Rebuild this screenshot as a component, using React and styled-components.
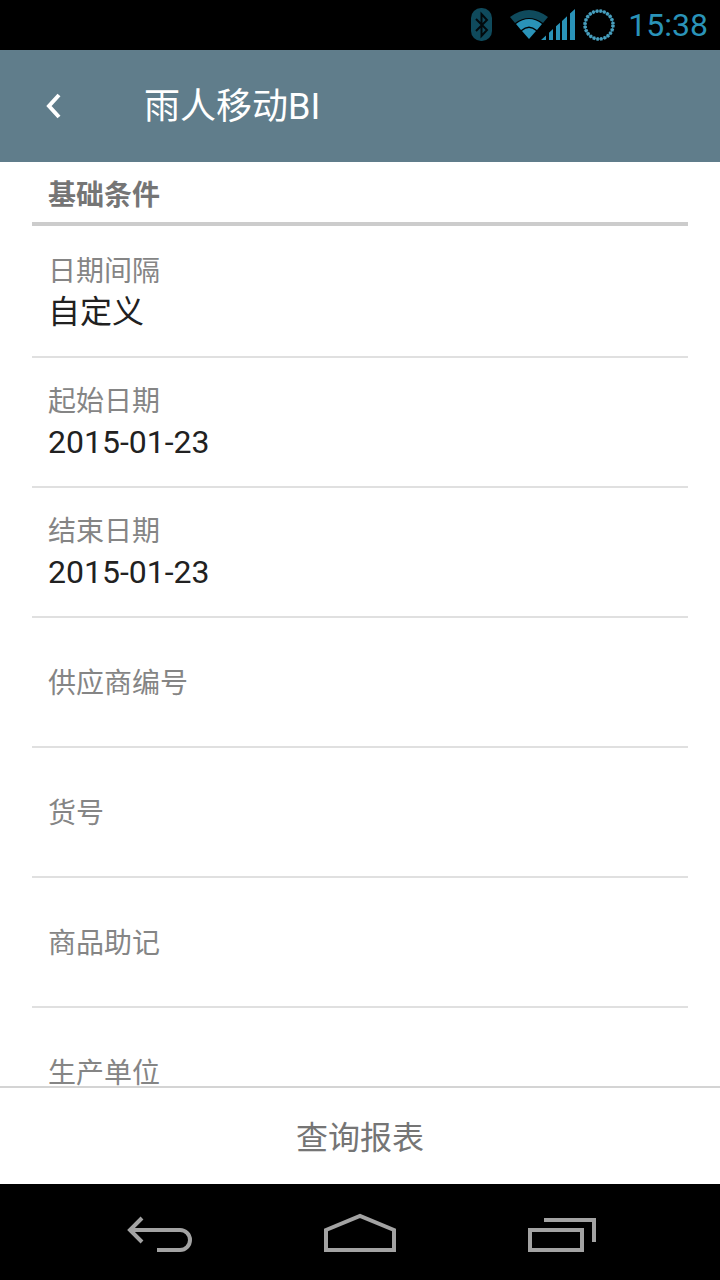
import React from 'react';
import styled, { createGlobalStyle } from 'styled-components';

const GlobalStyle = createGlobalStyle`
    html, body {
        margin: 0;
        padding: 0;
        background: #fff;
    }
    body {
        font-family: Roboto, "Noto Sans CJK SC", sans-serif;
    }
`;

const fields = [
    { label: '日期间隔', value: '自定义' },
    { label: '起始日期', value: '2015-01-23' },
    { label: '结束日期', value: '2015-01-23' },
    { label: '供应商编号' },
    { label: '货号' },
    { label: '商品助记' },
    { label: '生产单位' },
];

function App() {
    return (
        <Screen>
            <GlobalStyle />
            <StatusBar>
                <svg width="24" height="34" viewBox="0 0 24 34">
                    <rect x="1" y="0" width="21" height="33" rx="10" fill="#0f4a5c" />
                    <path d="M6 11 L17 22 L11.5 28 V6 L17 12 L6 23" fill="none" stroke="#020a0d" strokeWidth="2" />
                </svg>
                <SignalIcons width="66" height="34" viewBox="0 0 66 34">
                    <path d="M0 9 Q19 -5 38 9 L33 15 Q19 5 5 15 Z" fill="#0f4a5c" />
                    <path d="M6 16 Q19 6 32 16 L27 22 Q19 15 11 22 Z" fill="#2a93b8" />
                    <path d="M12 23 Q19 17 26 23 L19 31 Z" fill="#2a93b8" />
                    <path d="M31 32 L36 27.4 V32 Z M39 32 V24.7 L43 21 V32 Z M46 32 V18.3 L50 14.7 V32 Z M52 32 V12.9 L57 8.3 V32 Z M60 32 V5.6 L65 1 V32 Z" fill="#2a93b8" />
                </SignalIcons>
                <svg width="34" height="34" viewBox="0 0 34 34">
                    <circle cx="17" cy="17" r="14" fill="none" stroke="#2a7f9e" strokeWidth="1.5" />
                    <circle cx="17" cy="17" r="14" fill="none" stroke="#4a9fbd" strokeWidth="3.5" strokeDasharray="2.4 1.27" />
                </svg>
                <Clock>15:38</Clock>
            </StatusBar>
            <Header>
                <BackButton width="20" height="28" viewBox="0 0 20 28">
                    <path d="M15 3 L5 14 L15 25" fill="none" stroke="#fff" strokeWidth="4" />
                </BackButton>
                <Title>雨人移动BI</Title>
            </Header>
            <Content>
                <SectionTitle>基础条件</SectionTitle>
                {fields.map(field => (
                    <Row key={field.label}>
                        <Label>{field.label}</Label>
                        {field.value && <Value>{field.value}</Value>}
                    </Row>
                ))}
            </Content>
            <QueryBar>查询报表</QueryBar>
            <NavBar>
                <svg width="68" height="44" viewBox="0 0 68 44">
                    <path d="M16 8 L4 20 L16 32 M4 20 H54 A10 10 0 0 1 54 40 H31" fill="none" stroke="#a3a3a3" strokeWidth="4" />
                </svg>
                <svg width="74" height="44" viewBox="0 0 74 44">
                    <path d="M3 40 V20 L37 6 L71 20 V40 Z" fill="none" stroke="#a3a3a3" strokeWidth="4" />
                </svg>
                <svg width="70" height="44" viewBox="0 0 70 44">
                    <path d="M18 10 H68 V32" fill="none" stroke="#a3a3a3" strokeWidth="4" />
                    <rect x="4" y="20" width="52" height="20" fill="none" stroke="#a3a3a3" strokeWidth="4" />
                </svg>
            </NavBar>
        </Screen>
    );
}

export default App;

const Screen = styled.div`
    display: flex;
    flex-direction: column;
    width: 720px;
    height: 1280px;
    overflow: hidden;
    background: #fff;
`;

const StatusBar = styled.div`
    display: flex;
    align-items: center;
    justify-content: flex-end;
    flex: none;
    height: 50px;
    padding-right: 12px;
    background: #000;
`;

const SignalIcons = styled.svg`
    margin: 0 6px 0 16px;
`;

const Clock = styled.span`
    margin-left: 12px;
    font-size: 32px;
    color: #2a93b8;
`;

const Header = styled.div`
    display: flex;
    align-items: center;
    flex: none;
    height: 112px;
    padding-left: 44px;
    background: #607d8b;
`;

const BackButton = styled.svg`
    margin-right: 80px;
`;

const Title = styled.h1`
    margin: 0 0 6px;
    font-size: 36px;
    font-weight: 400;
    color: #fff;
`;

const Content = styled.div`
    flex: 1;
    min-height: 0;
    margin: 0 32px;
    overflow: hidden;
`;

const SectionTitle = styled.h2`
    height: 60px;
    margin: 0;
    padding-left: 16px;
    border-bottom: 4px solid #cccccc;
    font-size: 28px;
    font-weight: 700;
    line-height: 67px;
    color: #757575;
`;

const Row = styled.div`
    display: flex;
    flex-direction: column;
    justify-content: center;
    box-sizing: border-box;
    height: 130px;
    padding: 4px 0 0 16px;
    border-bottom: 2px solid #e0e0e0;

    &:first-of-type {
        height: 132px;
        padding-top: 6px;
    }
`;

const Label = styled.div`
    font-size: 28px;
    line-height: 36px;
    color: #858585;
`;

const Value = styled.div`
    font-size: 32px;
    line-height: 44px;
    color: #212121;
`;

const QueryBar = styled.div`
    flex: none;
    box-sizing: border-box;
    height: 98px;
    border-top: 2px solid #d4d4d4;
    font-size: 32px;
    line-height: 100px;
    text-align: center;
    color: #757575;
`;

const NavBar = styled.div`
    display: flex;
    align-items: center;
    justify-content: space-between;
    flex: none;
    height: 96px;
    padding: 0 124px 0 126px;
    background: #000;
`;
